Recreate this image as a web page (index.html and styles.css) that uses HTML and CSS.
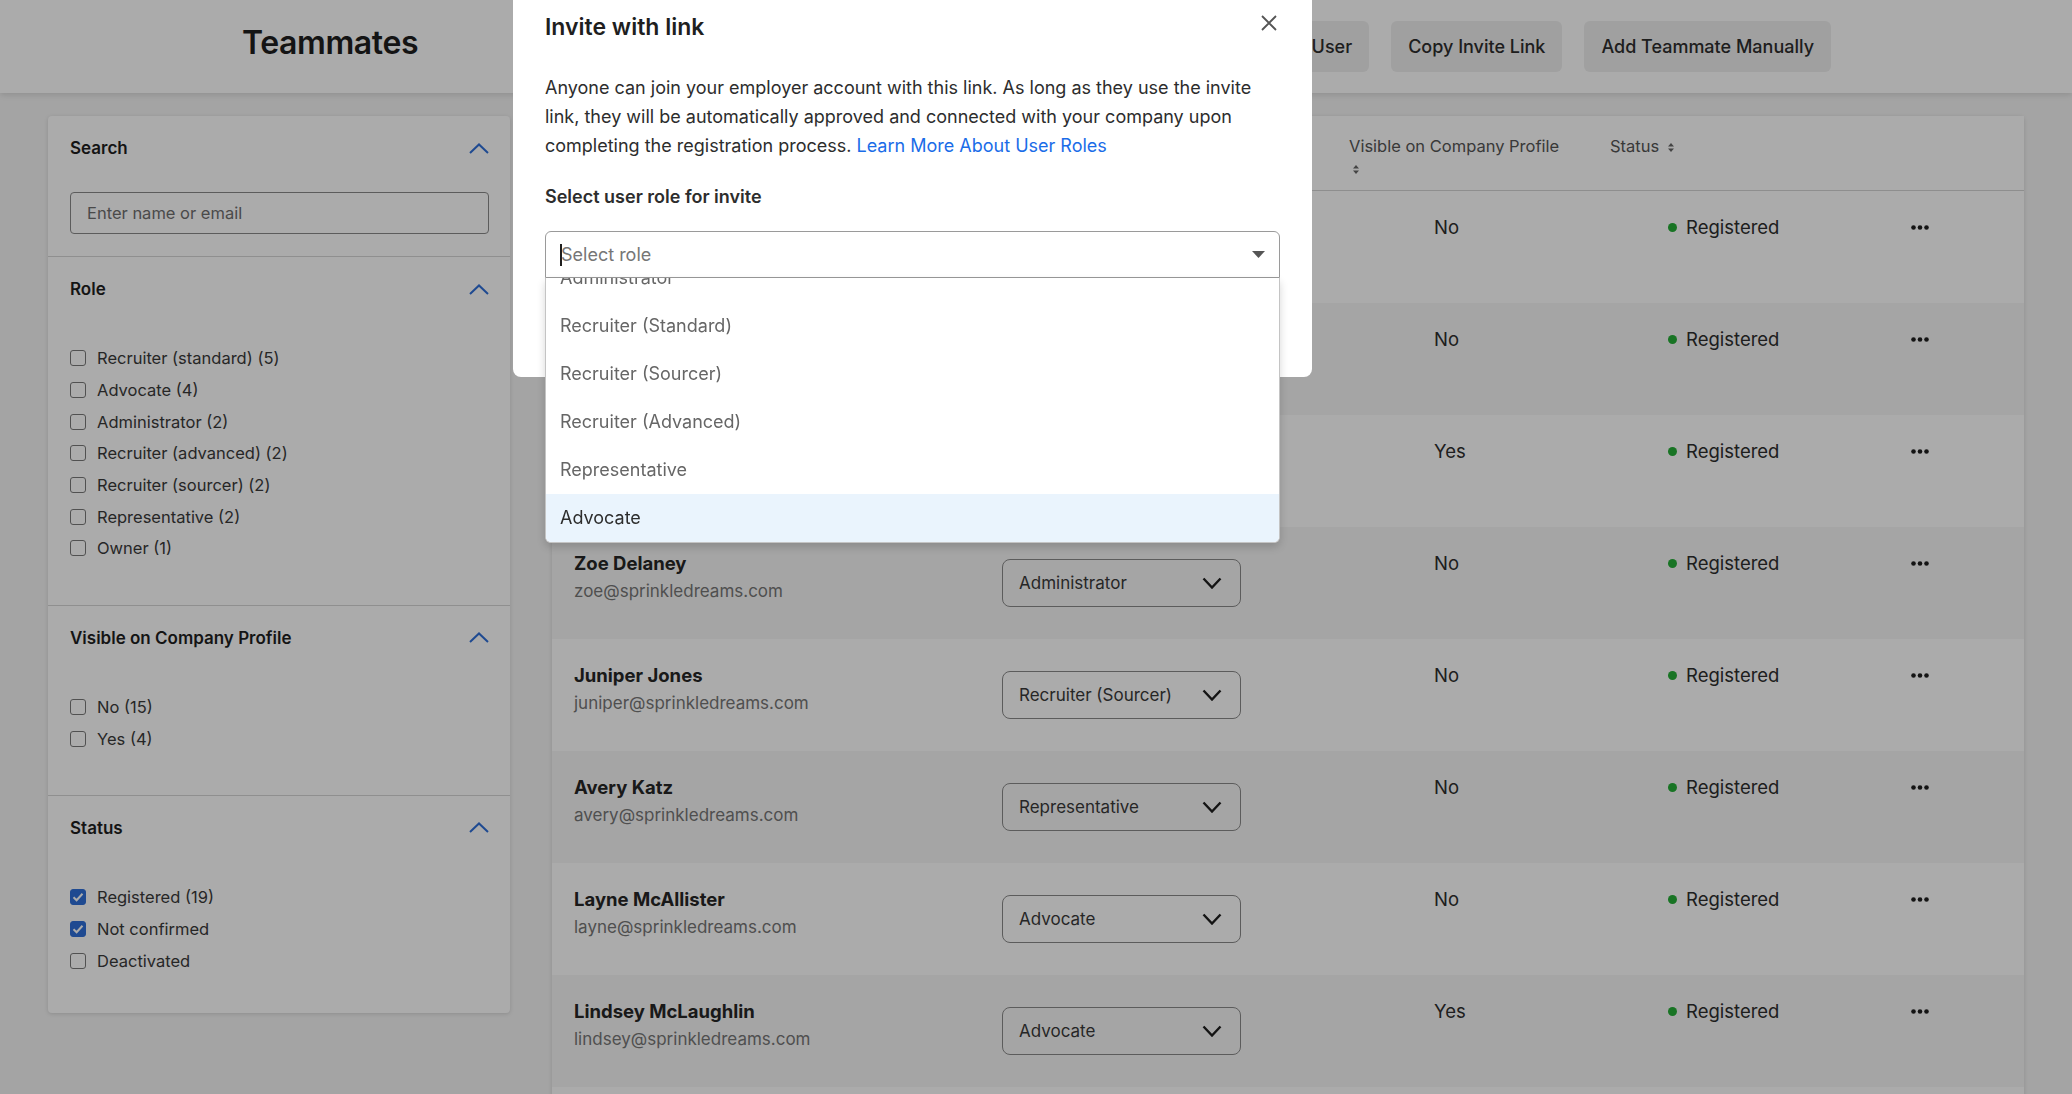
FILE: index.html
```html
<!DOCTYPE html>
<html lang="en">
<head>
    <meta charset="UTF-8">
    <meta name="viewport" content="width=device-width, initial-scale=1.0">
    <title>Teammates</title>
    <link rel="stylesheet" href="styles.css">
</head>
<body>
    <header class="topbar">
        <h1 class="page-title">Teammates</h1>
        <div class="topbar-actions">
            <button class="btn">Invite User</button>
            <button class="btn">Copy Invite Link</button>
            <button class="btn">Add Teammate Manually</button>
        </div>
    </header>

    <main class="layout">
        <aside class="filters">
            <div class="filter-section search-section">
                <div class="filter-head">
                    <span>Search</span>
                    <svg class="chev-up" width="20" height="11" viewBox="0 0 20 11"><path d="M1 10L10 1.5L19 10" fill="none" stroke="currentColor" stroke-width="2"/></svg>
                </div>
                <input class="search-input" type="text" placeholder="Enter name or email">
            </div>

            <div class="filter-section">
                <div class="filter-head">
                    <span>Role</span>
                    <svg class="chev-up" width="20" height="11" viewBox="0 0 20 11"><path d="M1 10L10 1.5L19 10" fill="none" stroke="currentColor" stroke-width="2"/></svg>
                </div>
                <ul class="check-list">
                    <li><span class="box"></span>Recruiter (standard) (5)</li>
                    <li><span class="box"></span>Advocate (4)</li>
                    <li><span class="box"></span>Administrator (2)</li>
                    <li><span class="box"></span>Recruiter (advanced) (2)</li>
                    <li><span class="box"></span>Recruiter (sourcer) (2)</li>
                    <li><span class="box"></span>Representative (2)</li>
                    <li><span class="box"></span>Owner (1)</li>
                </ul>
            </div>

            <div class="filter-section">
                <div class="filter-head">
                    <span>Visible on Company Profile</span>
                    <svg class="chev-up" width="20" height="11" viewBox="0 0 20 11"><path d="M1 10L10 1.5L19 10" fill="none" stroke="currentColor" stroke-width="2"/></svg>
                </div>
                <ul class="check-list">
                    <li><span class="box"></span>No (15)</li>
                    <li><span class="box"></span>Yes (4)</li>
                </ul>
            </div>

            <div class="filter-section last">
                <div class="filter-head">
                    <span>Status</span>
                    <svg class="chev-up" width="20" height="11" viewBox="0 0 20 11"><path d="M1 10L10 1.5L19 10" fill="none" stroke="currentColor" stroke-width="2"/></svg>
                </div>
                <ul class="check-list">
                    <li><span class="box checked"><svg width="12" height="10" viewBox="0 0 12 10"><path d="M1.5 5.2L4.6 8.2L10.5 1.8" fill="none" stroke="#fff" stroke-width="2"/></svg></span>Registered (19)</li>
                    <li><span class="box checked"><svg width="12" height="10" viewBox="0 0 12 10"><path d="M1.5 5.2L4.6 8.2L10.5 1.8" fill="none" stroke="#fff" stroke-width="2"/></svg></span>Not confirmed</li>
                    <li><span class="box"></span>Deactivated</li>
                </ul>
            </div>
        </aside>

        <section class="table-card">
            <div class="t-row t-head">
                <div>Name</div>
                <div>Role</div>
                <div class="head-visible">Visible on Company Profile <span class="sort"><svg width="6" height="9" viewBox="0 0 6 9"><path d="M3 0L6 3.4H0Z M3 9L0 5.6H6Z" fill="#666"/></svg></span></div>
                <div>Status <span class="sort"><svg width="6" height="9" viewBox="0 0 6 9"><path d="M3 0L6 3.4H0Z M3 9L0 5.6H6Z" fill="#666"/></svg></span></div>
                <div></div>
            </div>

            <div class="t-row">
                <div><div class="name">Morgan Ellis</div><div class="email">morgan@sprinkledreams.com</div></div>
                <div><div class="role-select">Owner<svg width="20" height="12" viewBox="0 0 20 12"><path d="M1.5 1.5L10 10.5L18.5 1.5" fill="none" stroke="#1f1f1f" stroke-width="2.4"/></svg></div></div>
                <div class="visible">No</div>
                <div class="status"><span class="dot"></span>Registered</div>
                <div class="more"><svg width="18" height="5" viewBox="0 0 18 5"><circle cx="2.5" cy="2.5" r="2.3"/><circle cx="9" cy="2.5" r="2.3"/><circle cx="15.5" cy="2.5" r="2.3"/></svg></div>
            </div>
            <div class="t-row">
                <div><div class="name">Riley Chen</div><div class="email">riley@sprinkledreams.com</div></div>
                <div><div class="role-select">Recruiter (Standard)<svg width="20" height="12" viewBox="0 0 20 12"><path d="M1.5 1.5L10 10.5L18.5 1.5" fill="none" stroke="#1f1f1f" stroke-width="2.4"/></svg></div></div>
                <div class="visible">No</div>
                <div class="status"><span class="dot"></span>Registered</div>
                <div class="more"><svg width="18" height="5" viewBox="0 0 18 5"><circle cx="2.5" cy="2.5" r="2.3"/><circle cx="9" cy="2.5" r="2.3"/><circle cx="15.5" cy="2.5" r="2.3"/></svg></div>
            </div>
            <div class="t-row">
                <div><div class="name">Sam Patel</div><div class="email">sam@sprinkledreams.com</div></div>
                <div><div class="role-select">Recruiter (Advanced)<svg width="20" height="12" viewBox="0 0 20 12"><path d="M1.5 1.5L10 10.5L18.5 1.5" fill="none" stroke="#1f1f1f" stroke-width="2.4"/></svg></div></div>
                <div class="visible">Yes</div>
                <div class="status"><span class="dot"></span>Registered</div>
                <div class="more"><svg width="18" height="5" viewBox="0 0 18 5"><circle cx="2.5" cy="2.5" r="2.3"/><circle cx="9" cy="2.5" r="2.3"/><circle cx="15.5" cy="2.5" r="2.3"/></svg></div>
            </div>
            <div class="t-row">
                <div><div class="name">Zoe Delaney</div><div class="email">zoe@sprinkledreams.com</div></div>
                <div><div class="role-select">Administrator<svg width="20" height="12" viewBox="0 0 20 12"><path d="M1.5 1.5L10 10.5L18.5 1.5" fill="none" stroke="#1f1f1f" stroke-width="2.4"/></svg></div></div>
                <div class="visible">No</div>
                <div class="status"><span class="dot"></span>Registered</div>
                <div class="more"><svg width="18" height="5" viewBox="0 0 18 5"><circle cx="2.5" cy="2.5" r="2.3"/><circle cx="9" cy="2.5" r="2.3"/><circle cx="15.5" cy="2.5" r="2.3"/></svg></div>
            </div>
            <div class="t-row">
                <div><div class="name">Juniper Jones</div><div class="email">juniper@sprinkledreams.com</div></div>
                <div><div class="role-select">Recruiter (Sourcer)<svg width="20" height="12" viewBox="0 0 20 12"><path d="M1.5 1.5L10 10.5L18.5 1.5" fill="none" stroke="#1f1f1f" stroke-width="2.4"/></svg></div></div>
                <div class="visible">No</div>
                <div class="status"><span class="dot"></span>Registered</div>
                <div class="more"><svg width="18" height="5" viewBox="0 0 18 5"><circle cx="2.5" cy="2.5" r="2.3"/><circle cx="9" cy="2.5" r="2.3"/><circle cx="15.5" cy="2.5" r="2.3"/></svg></div>
            </div>
            <div class="t-row">
                <div><div class="name">Avery Katz</div><div class="email">avery@sprinkledreams.com</div></div>
                <div><div class="role-select">Representative<svg width="20" height="12" viewBox="0 0 20 12"><path d="M1.5 1.5L10 10.5L18.5 1.5" fill="none" stroke="#1f1f1f" stroke-width="2.4"/></svg></div></div>
                <div class="visible">No</div>
                <div class="status"><span class="dot"></span>Registered</div>
                <div class="more"><svg width="18" height="5" viewBox="0 0 18 5"><circle cx="2.5" cy="2.5" r="2.3"/><circle cx="9" cy="2.5" r="2.3"/><circle cx="15.5" cy="2.5" r="2.3"/></svg></div>
            </div>
            <div class="t-row">
                <div><div class="name">Layne McAllister</div><div class="email">layne@sprinkledreams.com</div></div>
                <div><div class="role-select">Advocate<svg width="20" height="12" viewBox="0 0 20 12"><path d="M1.5 1.5L10 10.5L18.5 1.5" fill="none" stroke="#1f1f1f" stroke-width="2.4"/></svg></div></div>
                <div class="visible">No</div>
                <div class="status"><span class="dot"></span>Registered</div>
                <div class="more"><svg width="18" height="5" viewBox="0 0 18 5"><circle cx="2.5" cy="2.5" r="2.3"/><circle cx="9" cy="2.5" r="2.3"/><circle cx="15.5" cy="2.5" r="2.3"/></svg></div>
            </div>
            <div class="t-row">
                <div><div class="name">Lindsey McLaughlin</div><div class="email">lindsey@sprinkledreams.com</div></div>
                <div><div class="role-select">Advocate<svg width="20" height="12" viewBox="0 0 20 12"><path d="M1.5 1.5L10 10.5L18.5 1.5" fill="none" stroke="#1f1f1f" stroke-width="2.4"/></svg></div></div>
                <div class="visible">Yes</div>
                <div class="status"><span class="dot"></span>Registered</div>
                <div class="more"><svg width="18" height="5" viewBox="0 0 18 5"><circle cx="2.5" cy="2.5" r="2.3"/><circle cx="9" cy="2.5" r="2.3"/><circle cx="15.5" cy="2.5" r="2.3"/></svg></div>
            </div>
            <div class="t-row t-tail"></div>
        </section>
    </main>

    <div class="overlay"></div>

    <div class="modal">
        <h2 class="modal-title">Invite with link</h2>
        <svg class="modal-close" width="16" height="16" viewBox="0 0 16 16"><path d="M1 1L15 15M15 1L1 15" stroke="#555" stroke-width="1.8"/></svg>
        <p class="modal-text">Anyone can join your employer account with this link. As long as they use the invite link, they will be automatically approved and connected with your company upon completing the registration process. <a href="#">Learn More About User Roles</a></p>
        <div class="field-label">Select user role for invite</div>
        <div class="role-picker">
            <div class="picker-box">
                <span class="cursor"></span><span class="placeholder">Select role</span>
                <svg class="picker-caret" width="13" height="7" viewBox="0 0 13 7"><path d="M0 0H13L6.5 7Z" fill="#555"/></svg>
            </div>
            <div class="picker-menu">
                <ul class="picker-list">
                    <li>Administrator</li>
                    <li>Recruiter (Standard)</li>
                    <li>Recruiter (Sourcer)</li>
                    <li>Recruiter (Advanced)</li>
                    <li>Representative</li>
                    <li class="active">Advocate</li>
                </ul>
            </div>
        </div>
    </div>
</body>
</html>
```

FILE: styles.css
```css
body {
    margin: 0;
    font-family: Inter, "Noto Sans", sans-serif;
    background-color: #f5f5f5;
    color: #2d2d2d;
    overflow: hidden;
}
ul {
    list-style: none;
    margin: 0;
    padding: 0;
}

/* top bar */
.topbar {
    height: 93px;
    box-sizing: border-box;
    background-color: #fff;
    box-shadow: 0 2px 6px rgba(0,0,0,0.12);
    display: flex;
    align-items: center;
    justify-content: space-between;
    padding: 0 241px 0 242px;
    position: relative;
}
.page-title {
    margin: 0 0 9px;
    font-size: 32px;
    font-weight: 600;
    letter-spacing: -0.4px;
    color: #1f1f1f;
}
.topbar-actions {
    display: flex;
    gap: 22px;
}
.btn {
    height: 51px;
    padding: 0 17px;
    border: none;
    border-radius: 6px;
    background-color: #efefef;
    font-family: inherit;
    font-size: 18px;
    font-weight: 500;
    color: #2d2d2d;
}

/* layout */
.layout {
    display: flex;
    align-items: flex-start;
    gap: 42px;
    padding: 23px 48px 0;
}

/* filters */
.filters {
    width: 462px;
    flex: none;
    background-color: #fff;
    border-radius: 4px;
    box-shadow: 0 1px 4px rgba(0,0,0,0.14);
}
.filter-section {
    padding: 20px 21px 40.5px 22px;
    border-bottom: 1px solid #d6d6d6;
}
.filter-section.last {
    border-bottom: none;
    padding-bottom: 37px;
}
.search-section {
    padding-bottom: 22px;
}
.filter-head {
    display: flex;
    justify-content: space-between;
    align-items: center;
    height: 24px;
    font-size: 17px;
    font-weight: 600;
    color: #1f1f1f;
}
.chev-up {
    color: #2f6fd8;
}
.search-input {
    display: block;
    width: 100%;
    box-sizing: border-box;
    height: 42px;
    margin-top: 32px;
    padding: 0 16px;
    border: 1px solid #8a8a8a;
    border-radius: 4px;
    font-family: inherit;
    font-size: 16.5px;
    color: #2d2d2d;
}
.search-input::placeholder {
    color: #6f6f6f;
}
.check-list {
    margin-top: 41.5px;
}
.check-list li {
    height: 31.67px;
    display: flex;
    align-items: center;
    gap: 11px;
    font-size: 16.5px;
    color: #3a3a3a;
}
.box {
    width: 16px;
    height: 16px;
    box-sizing: border-box;
    border: 1.5px solid #7a7a7a;
    border-radius: 3px;
    display: flex;
    align-items: center;
    justify-content: center;
}
.box.checked {
    background-color: #2f6fd8;
    border-color: #2f6fd8;
}

/* table */
.table-card {
    flex: 1;
    background-color: #fff;
    border-radius: 4px;
    box-shadow: 0 1px 4px rgba(0,0,0,0.14);
}
.t-row {
    display: grid;
    grid-template-columns: 428px 347px 261px 301px 1fr;
    height: 112px;
    box-sizing: border-box;
    padding: 24px 0 0 22px;
}
.t-row:nth-child(odd) {
    background-color: #f7f7f7;
}
.t-row.t-head {
    height: 75px;
    padding-top: 19px;
    border-bottom: 1px solid #d4d4d4;
    font-size: 16.5px;
    line-height: 22px;
    color: #555;
    background-color: #fff;
}
.head-visible {
    padding-right: 48px;
}
.sort {
    display: inline-block;
    margin-left: 4px;
}
.name {
    font-size: 18.5px;
    font-weight: 700;
    line-height: 24px;
    color: #262626;
}
.email {
    font-size: 17px;
    line-height: 32px;
    color: #767676;
}
.role-select {
    width: 239px;
    height: 48px;
    box-sizing: border-box;
    margin-top: 8px;
    padding: 0 18px 0 16px;
    border: 1px solid #8a8a8a;
    border-radius: 8px;
    display: flex;
    align-items: center;
    justify-content: space-between;
    font-size: 17px;
    color: #3a3a3a;
}
.visible {
    padding-left: 85px;
    font-size: 18.5px;
    line-height: 24px;
    color: #2d2d2d;
}
.status {
    padding-left: 58px;
    display: flex;
    align-items: center;
    gap: 9px;
    height: 24px;
    font-size: 18.5px;
    color: #2d2d2d;
}
.dot {
    width: 9px;
    height: 9px;
    border-radius: 50%;
    background-color: #25ad36;
}
.more {
    height: 24px;
    display: flex;
    align-items: center;
}
.more svg {
    fill: #1f1f1f;
}

/* modal */
.overlay {
    position: fixed;
    inset: 0;
    background-color: rgba(0,0,0,0.33);
    z-index: 10;
}
.modal {
    position: fixed;
    top: 0;
    left: 513px;
    width: 799px;
    height: 377px;
    box-sizing: border-box;
    padding: 11px 32px 0;
    background-color: #fff;
    border-radius: 0 0 8px 8px;
    z-index: 20;
}
.modal-title {
    margin: 0;
    font-size: 23px;
    font-weight: 600;
    line-height: 32px;
    color: #1f1f1f;
}
.modal-close {
    position: absolute;
    top: 15px;
    right: 35px;
}
.modal-text {
    margin: 30px 0 0;
    font-size: 18px;
    line-height: 29px;
    color: #2d2d2d;
}
.modal-text a {
    color: #1a6ce8;
    text-decoration: none;
}
.field-label {
    margin-top: 23px;
    font-size: 18px;
    font-weight: 600;
    line-height: 28px;
    color: #2d2d2d;
}
.role-picker {
    position: relative;
    margin-top: 20px;
}
.picker-box {
    height: 47px;
    box-sizing: border-box;
    border: 1px solid #9a9a9a;
    border-radius: 6px 6px 0 0;
    display: flex;
    align-items: center;
    padding: 0 14px;
    font-size: 18px;
}
.cursor {
    width: 2px;
    height: 22px;
    background-color: #1f1f1f;
    margin-right: -1px;
}
.placeholder {
    flex: 1;
    color: #767676;
}
.picker-menu {
    position: absolute;
    top: 100%;
    left: 0;
    right: 0;
    height: 264px;
    overflow: hidden;
    background-color: #fff;
    border: 1px solid #c4c4c4;
    border-top: none;
    border-radius: 0 0 6px 6px;
    box-shadow: 0 4px 8px rgba(0,0,0,0.16);
}
.picker-list {
    margin-top: -24px;
}
.picker-list li {
    height: 48px;
    line-height: 48px;
    padding-left: 14px;
    font-size: 18px;
    color: #666;
}
.picker-list li.active {
    background-color: #eaf4fd;
    color: #2d2d2d;
}
```
